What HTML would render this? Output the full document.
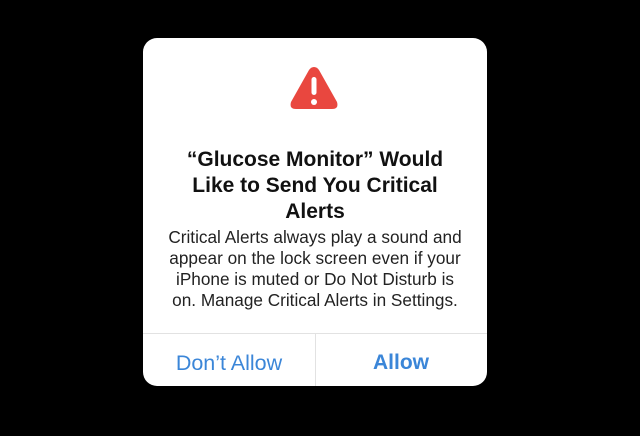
<html><head><style>
body{margin:0;width:640px;height:436px;background:#000;overflow:hidden;font-family:"Liberation Sans",sans-serif}
.card{position:absolute;left:143px;top:38px;width:344px;height:348px;background:#fff;border-radius:14px;overflow:hidden}
.t{position:absolute;left:0;width:344px;text-align:center;top:109px;font-weight:bold;font-size:21px;line-height:26px;color:#111}
.b{position:absolute;left:-10px;width:364px;text-align:center;top:189px;font-size:17.2px;line-height:21px;color:#222}
.hl{position:absolute;left:0;top:295px;width:344px;height:1px;background:#e2e2e2}
.vl{position:absolute;left:172px;top:296px;width:1px;height:52px;background:#e2e2e2}
.btn{position:absolute;top:313px;font-size:21.5px;color:#3b86d8;text-align:center;width:172px}
</style></head><body>
<div class="card">
<svg style="position:absolute;left:145px;top:26px" width="52" height="48" viewBox="0 0 52 48"><path d="M26 3 Q29 3 31 6 L49 38 Q51 45 44 45 L8 45 Q1 45 3 38 L21 6 Q23 3 26 3Z" fill="#e9473f"/><rect x="23.5" y="13" width="5" height="18" rx="2.5" fill="#fff"/><circle cx="26" cy="38" r="3" fill="#fff"/></svg>
<div class="t">“Glucose Monitor” Would<br>Like to Send You Critical<br>Alerts</div>
<div class="b">Critical Alerts always play a sound and<br>appear on the lock screen even if your<br>iPhone is muted or Do Not Disturb is<br>on. Manage Critical Alerts in Settings.</div>
<div class="hl"></div><div class="vl"></div>
<div class="btn" style="left:0">Don’t Allow</div>
<div class="btn" style="left:172px;font-weight:bold;font-size:21px">Allow</div>
</div>
</body></html>
